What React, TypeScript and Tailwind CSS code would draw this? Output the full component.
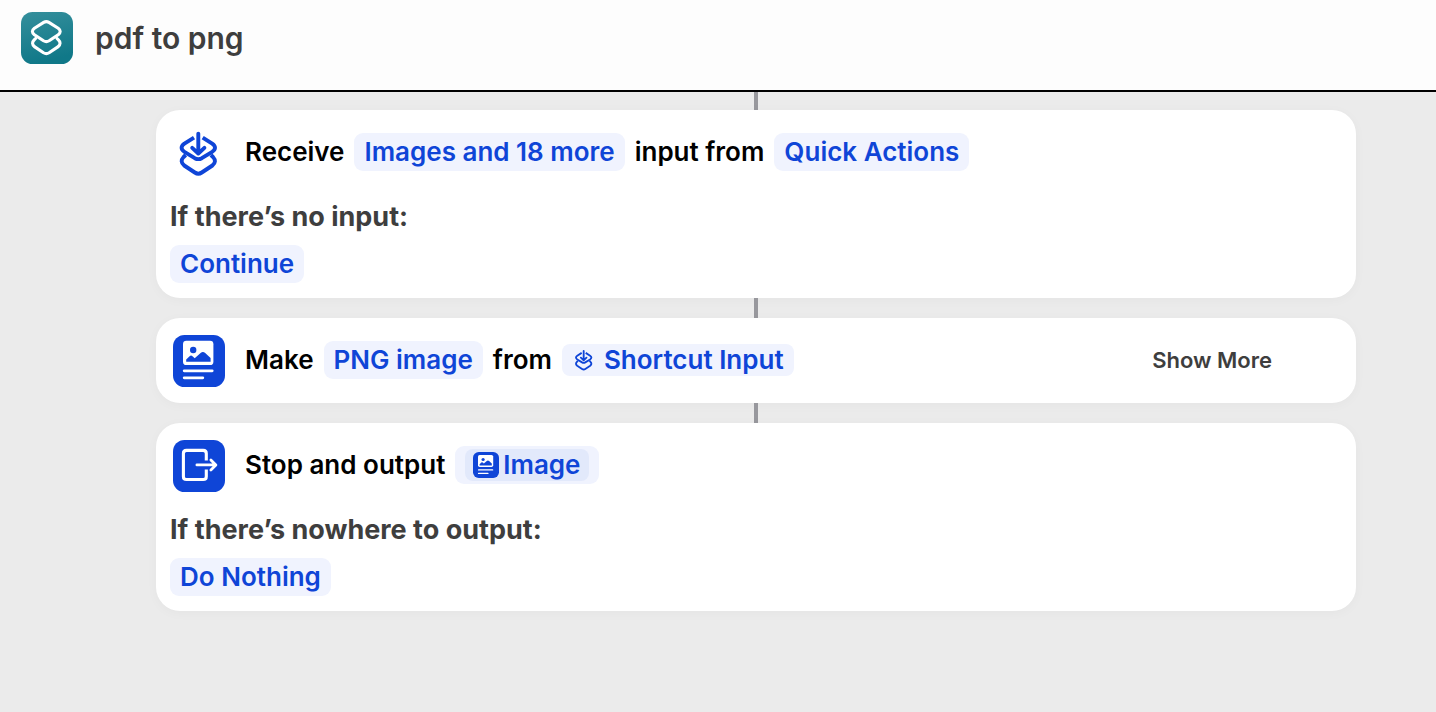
import type { ReactNode } from "react";

function ShortcutsLogo() {
  return (
    <svg viewBox="0 0 52 52" className="size-[52px] shrink-0" aria-hidden="true">
      <defs>
        <linearGradient id="logo-fill" x1="0" y1="0" x2="0.25" y2="1">
          <stop offset="0" stopColor="#358f9c" />
          <stop offset="1" stopColor="#107888" />
        </linearGradient>
      </defs>
      <rect width="52" height="52" rx="11.5" fill="url(#logo-fill)" />
      <g fill="none" stroke="#fff" strokeWidth="3.1" strokeLinejoin="round" strokeLinecap="round">
        <path d="M22.7 10.4Q25.3 8.8 27.9 10.4L37.2 16.3Q41.2 19.4 37.2 22.7L28.1 28.8Q25.3 30.5 22.5 28.8L13.4 22.7Q9.4 19.4 13.4 16.3Z" />
        <path d="M14.6 26.5L13.2 27.9Q9.8 31.2 13.4 34.6L22.5 40.8Q25.3 42.5 28.1 40.8L37.2 34.6Q40.8 31.2 37.4 27.9L36 26.5" />
      </g>
    </svg>
  );
}

function ReceiveGlyph({ className, strokeWidth }: { className: string; strokeWidth: number }) {
  return (
    <svg
      viewBox="0 0 52 52"
      className={className}
      fill="none"
      stroke="currentColor"
      strokeWidth={strokeWidth}
      strokeLinejoin="round"
      aria-hidden="true"
    >
      <path d="M21 10.6L11.4 16.7Q5.8 20.7 11.4 24.8L21.8 31.2Q25.3 33.1 28.8 31.2L39.2 24.8Q44.8 20.7 39.2 16.7L29.7 10.6" />
      <path d="M12.7 28L10.6 30Q6.4 34.6 11.2 38.5L21.8 45.5Q25.3 47.8 28.8 45.5L39.4 38.5Q44.2 34.6 40 30L37.9 28" />
      <path d="M25.3 6.6V26.2M19.2 20.9L25.3 26.5L31.4 20.9" strokeLinecap="round" />
    </svg>
  );
}

function ImageDocIcon({ className }: { className: string }) {
  return (
    <svg viewBox="0 0 52 52" className={className} aria-hidden="true">
      <rect width="52" height="52" rx="11.5" fill="#0f45d7" />
      <rect x="10" y="5.8" width="30.4" height="24.3" rx="3.4" fill="#fff" />
      <circle cx="20.2" cy="15" r="3.2" fill="#0f45d7" />
      <path
        d="M13.2 26.8V24.6L16.6 21.2Q18 19.9 19.5 21.2L21.7 23.2L27.6 18Q29.9 16.1 32.2 18L37.6 23V26.8Z"
        fill="#0f45d7"
      />
      <path d="M11.2 35.8H39.2M11.2 42.8H29.8" stroke="#fff" strokeWidth="2.8" strokeLinecap="round" />
    </svg>
  );
}

function OutputIcon() {
  return (
    <svg viewBox="0 0 52 52" className="size-[52px] shrink-0" aria-hidden="true">
      <rect width="52" height="52" rx="11.5" fill="#0f45d7" />
      <g fill="none" stroke="#fff" strokeWidth="3.1">
        <path d="M33.3 20.4V13.5Q33.3 10.4 30.2 10.4H13.5Q10.4 10.4 10.4 13.5V36.4Q10.4 39.5 13.5 39.5H30.2Q33.3 39.5 33.3 36.4V29.4" />
        <path d="M23.9 24.9H42.6M37.9 19.9L42.9 24.9L37.9 29.9" strokeWidth="2.8" strokeLinecap="round" strokeLinejoin="round" />
      </g>
    </svg>
  );
}

function Pill({ children }: { children: ReactNode }) {
  return (
    <button
      type="button"
      className="flex h-[38px] items-center rounded-[9px] bg-[#f0f3fe] px-2.5 text-[#0f45d7]"
    >
      {children}
    </button>
  );
}

function Connector({ className }: { className: string }) {
  return <div className={`mx-auto w-1 bg-[#98989d] ${className}`} />;
}

function Card({ children }: { children: ReactNode }) {
  return (
    <section className="rounded-[24px] bg-white pt-[17px] shadow-[0_2px_12px_rgba(0,0,0,0.03)]">
      {children}
    </section>
  );
}

function ActionRow({ icon, children, trailing }: { icon: ReactNode; children: ReactNode; trailing?: ReactNode }) {
  return (
    <div className="flex items-center gap-5 pr-[84px] pl-[17px]">
      {icon}
      <div className="flex items-center gap-2.5 pb-0.5 whitespace-nowrap">{children}</div>
      {trailing}
    </div>
  );
}

function Fallback({ label, value }: { label: string; value: string }) {
  return (
    <div className="mt-5 flex flex-col items-start gap-2.5 px-3.5 pb-[15px]">
      <p className="text-[27px] leading-9 font-bold text-[#3e3e3e]">{label}</p>
      <Pill>{value}</Pill>
    </div>
  );
}

export default function App() {
  return (
    <div className="flex min-h-screen flex-col bg-[#ebebeb] font-['Inter',sans-serif] text-[26px] leading-8 font-semibold text-black">
      <header className="flex h-[92px] items-start gap-[22px] border-b-2 border-black bg-[#fdfdfd] px-[21px] pt-3">
        <ShortcutsLogo />
        <h1 className="text-[30px] leading-[52px] text-[#3e3e3e]">pdf to png</h1>
      </header>

      <main className="pr-20 pb-10 pl-[156px]">
        <Connector className="h-[18px]" />
        <Card>
          <ActionRow icon={<ReceiveGlyph className="size-[52px] shrink-0 text-[#0f45d7]" strokeWidth={3.9} />}>
            <span>Receive</span>
            <Pill>Images and 18 more</Pill>
            <span>input from</span>
            <Pill>Quick Actions</Pill>
          </ActionRow>
          <Fallback label="If there’s no input:" value="Continue" />
        </Card>

        <Connector className="h-5" />
        <Card>
          <div className="pb-4">
            <ActionRow
              icon={<ImageDocIcon className="size-[52px] shrink-0" />}
              trailing={
                <button type="button" className="ml-auto pb-0.5 text-[22px] whitespace-nowrap text-[#3e3e3e]">
                  Show More
                </button>
              }
            >
              <span>Make</span>
              <Pill>PNG image</Pill>
              <span>from</span>
              <button
                type="button"
                className="flex h-8 items-center gap-2 rounded-lg bg-[#f0f3fe] px-2.5 text-[#0f45d7]"
              >
                <ReceiveGlyph className="size-6 shrink-0" strokeWidth={4} />
                Shortcut Input
              </button>
            </ActionRow>
          </div>
        </Card>

        <Connector className="h-5" />
        <Card>
          <ActionRow icon={<OutputIcon />}>
            <span>Stop and output</span>
            <Pill>
              <span className="flex h-8 items-center gap-1 rounded-lg bg-[#e2e9fb] px-2">
                <ImageDocIcon className="size-[26px] shrink-0" />
                Image
              </span>
            </Pill>
          </ActionRow>
          <Fallback label="If there’s nowhere to output:" value="Do Nothing" />
        </Card>
      </main>
    </div>
  );
}
